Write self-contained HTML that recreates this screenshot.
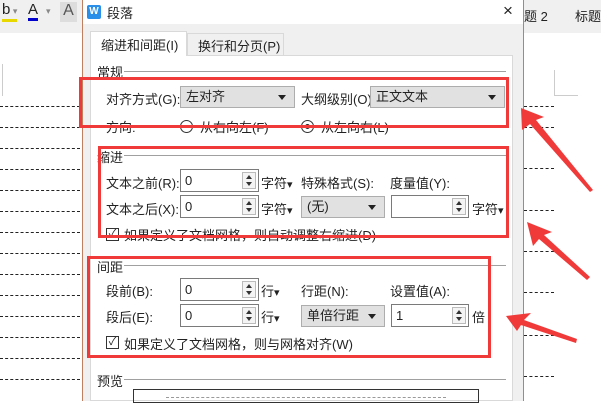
<!DOCTYPE html><html><head><meta charset="utf-8"><style>
*{margin:0;padding:0;box-sizing:border-box}
body{width:601px;height:401px;overflow:hidden;background:#fff;position:relative;font-family:"Liberation Sans","Noto Sans CJK SC",sans-serif;font-size:13px;color:#222}
.a{position:absolute;white-space:nowrap}
.dash{position:absolute;height:0;border-top:1px dashed #222}
.sel{position:absolute;background:#e1e1e1;border:1px solid #adadad;height:22px;padding:2px 5px;line-height:16px}
.sel:after{content:"";position:absolute;right:8px;top:8px;border:4px solid transparent;border-top:5px solid #222;border-bottom:0}
.spin{position:absolute;background:#fff;border:1px solid #7a7a7a;height:23px;width:79px;padding:2px 4px;line-height:17px}
.spin i{position:absolute;right:2px;top:2px;width:14px;height:17px;border:1px solid #bbb;background:#f4f4f4}
.spin i:before{content:"";position:absolute;left:3px;top:2px;border:3px solid transparent;border-bottom:4px solid #333;border-top:0}
.spin i:after{content:"";position:absolute;left:3px;bottom:2px;border:3px solid transparent;border-top:4px solid #333;border-bottom:0}
.grp{position:absolute;height:0;border-top:1px solid #a0a0a0}
.red{position:absolute;border:3px solid #f03a3a}
.cb{position:absolute;width:13px;height:13px;border:1px solid #333;background:#fff;font-size:11px;line-height:11px;text-align:center}
.rad{position:absolute;width:13px;height:13px;border:1px solid #333;border-radius:50%;background:#fff}
</style></head><body>
<div class="a" style="left:0;top:0;width:82px;height:33px;background:#f0f0f0"></div>
<div class="a" style="left:2px;top:2px;font-size:15px;border-bottom:3px solid #e8d800;line-height:16px">b<span style="font-size:9px;color:#888"> ▾</span></div>
<div class="a" style="left:28px;top:2px;font-size:15px;border-bottom:3px solid #00c;line-height:16px">A</div><div class="a" style="left:46px;top:6px;font-size:9px;color:#888">▾</div>
<div class="a" style="left:60px;top:2px;width:17px;height:20px;background:#ddd;text-align:center;font-size:16px;color:#555">A</div>
<div class="a" style="left:0;top:64px;width:3px;height:32px;border-right:1px solid #ccc"></div>
<div class="dash" style="left:0;top:106px;width:80px"></div>
<div class="dash" style="left:0;top:127px;width:80px"></div>
<div class="dash" style="left:0;top:148px;width:80px"></div>
<div class="dash" style="left:0;top:169px;width:80px"></div>
<div class="dash" style="left:0;top:190px;width:80px"></div>
<div class="dash" style="left:0;top:211px;width:80px"></div>
<div class="dash" style="left:0;top:232px;width:80px"></div>
<div class="dash" style="left:0;top:253px;width:80px"></div>
<div class="dash" style="left:0;top:274px;width:80px"></div>
<div class="dash" style="left:0;top:295px;width:80px"></div>
<div class="dash" style="left:0;top:316px;width:80px"></div>
<div class="dash" style="left:0;top:337px;width:80px"></div>
<div class="dash" style="left:0;top:358px;width:80px"></div>
<div class="dash" style="left:0;top:379px;width:80px"></div>
<div class="a" style="left:523px;top:0;width:78px;height:33px;background:#f0f0f0"></div>
<div class="a" style="left:524px;top:6px">题 2</div><div class="a" style="left:575px;top:6px">标题</div>
<div class="a" style="left:554px;top:70px;width:24px;height:26px;border-left:1px solid #ccc;border-bottom:1px solid #ccc"></div>
<div class="dash" style="left:524px;top:106px;width:30px"></div>
<div class="dash" style="left:524px;top:127px;width:30px"></div>
<div class="dash" style="left:524px;top:168px;width:30px"></div>
<div class="dash" style="left:524px;top:210px;width:30px"></div>
<div class="dash" style="left:524px;top:251px;width:30px"></div>
<div class="dash" style="left:524px;top:292px;width:30px"></div>
<div class="dash" style="left:524px;top:335px;width:30px"></div>
<div class="dash" style="left:524px;top:376px;width:30px"></div>
<div class="a" style="left:82px;top:0;width:442px;height:401px;background:#f0f0f0;border-left:1px solid #c08060;border-right:1px solid #c08060"></div>
<div class="a" style="left:83px;top:0;width:440px;height:24px;background:#fff"></div>
<div class="a" style="left:87px;top:5px;width:14px;height:14px;background:#2a8fe8;border-radius:2px;color:#fff;font-size:10px;font-weight:bold;text-align:center;line-height:14px">W</div>
<div class="a" style="left:107px;top:3px">段落</div>
<div class="a" style="left:503px;top:1px;font-size:17px">×</div>
<div class="a" style="left:90px;top:55px;width:423px;height:346px;background:#fff;border:1px solid #d9d9d9"></div>
<div class="a" style="left:90px;top:31px;width:97px;height:25px;background:#fff;border:1px solid #d9d9d9;border-bottom:none;padding:3px 10px">缩进和间距(I)</div>
<div class="a" style="left:187px;top:33px;width:97px;height:22px;background:#f0f0f0;border:1px solid #d9d9d9;border-bottom:none;padding:2px 10px">换行和分页(P)</div>
<div class="a" style="left:97px;top:62px">常规</div><div class="grp" style="left:124px;top:71px;width:382px"></div>
<div class="a" style="left:106px;top:89px">对齐方式(G):</div>
<div class="sel" style="left:180px;top:86px;width:115px">左对齐</div>
<div class="a" style="left:301px;top:89px">大纲级别(O):</div>
<div class="sel" style="left:370px;top:86px;width:135px">正文文本</div>
<div class="a" style="left:106px;top:117px">方向:</div>
<div class="rad" style="left:180px;top:120px"></div><div class="a" style="left:200px;top:117px">从右向左(F)</div>
<div class="rad" style="left:301px;top:120px"><div style="position:absolute;left:3px;top:3px;width:5px;height:5px;border-radius:50%;background:#222"></div></div><div class="a" style="left:321px;top:117px">从左向右(L)</div>
<div class="a" style="left:97px;top:147px">缩进</div><div class="grp" style="left:124px;top:155px;width:382px"></div>
<div class="a" style="left:106px;top:173px">文本之前(R):</div>
<div class="spin" style="left:180px;top:169px">0<i></i></div><div class="a" style="left:261px;top:173px">字符<small>▾</small></div>
<div class="a" style="left:301px;top:173px">特殊格式(S):</div><div class="a" style="left:390px;top:173px">度量值(Y):</div>
<div class="a" style="left:106px;top:199px">文本之后(X):</div>
<div class="spin" style="left:180px;top:195px">0<i></i></div><div class="a" style="left:261px;top:199px">字符<small>▾</small></div>
<div class="sel" style="left:301px;top:196px;width:84px">(无)</div>
<div class="spin" style="left:391px;top:195px;width:78px"><i></i></div><div class="a" style="left:472px;top:199px">字符<small>▾</small></div>
<div class="cb" style="left:106px;top:228px">✓</div><div class="a" style="left:124px;top:225px">如果定义了文档网格，则自动调整右缩进(D)</div>
<div class="a" style="left:97px;top:257px">间距</div><div class="grp" style="left:124px;top:265px;width:382px"></div>
<div class="a" style="left:106px;top:281px">段前(B):</div>
<div class="spin" style="left:180px;top:278px">0<i></i></div><div class="a" style="left:261px;top:281px">行<small>▾</small></div>
<div class="a" style="left:301px;top:281px">行距(N):</div><div class="a" style="left:390px;top:281px">设置值(A):</div>
<div class="a" style="left:106px;top:307px">段后(E):</div>
<div class="spin" style="left:180px;top:304px">0<i></i></div><div class="a" style="left:261px;top:307px">行<small>▾</small></div>
<div class="sel" style="left:301px;top:305px;width:84px">单倍行距</div>
<div class="spin" style="left:391px;top:304px;width:78px">1<i></i></div><div class="a" style="left:472px;top:307px">倍</div>
<div class="cb" style="left:106px;top:336px">✓</div><div class="a" style="left:124px;top:334px">如果定义了文档网格，则与网格对齐(W)</div>
<div class="a" style="left:97px;top:371px">预览</div><div class="grp" style="left:124px;top:379px;width:382px"></div>
<div class="a" style="left:133px;top:389px;width:346px;height:14px;border:1px solid #333"></div>
<div class="dash" style="left:166px;top:397px;width:280px;border-color:#999"></div>
<div class="red" style="left:79px;top:77px;width:430px;height:51px"></div>
<div class="red" style="left:98px;top:146px;width:411px;height:92px"></div>
<div class="red" style="left:87px;top:256px;width:404px;height:102px"></div>
<svg class="a" style="left:0;top:0" width="601" height="401">
<g fill="#f03a3a">
<polygon points="521,108 522,130 530,124 590,192 593,190 536,120 544,117"/>
<polygon points="527,222 533,246 539,239 587,280 590,277 544,235 552,232"/>
<polygon points="506,316 517,331 521,325 576,343 577,339 524,320 531,313"/>
</g></svg>
</body></html>
